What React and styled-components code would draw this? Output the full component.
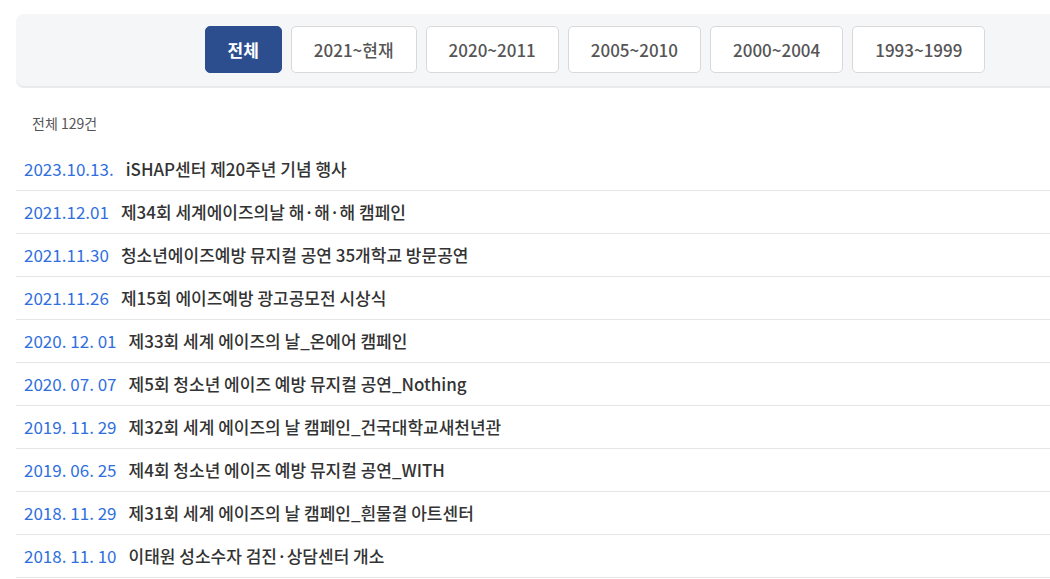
import React from "react";
import styled, { createGlobalStyle } from "styled-components";

const GlobalStyle = createGlobalStyle`
  html, body {
    margin: 0;
    padding: 0;
    background: #ffffff;
    overflow: hidden;
  }
  body {
    font-family: "Noto Sans CJK KR", "Noto Sans", sans-serif;
    color: #333;
  }
`;

const Page = styled.div`
  width: 1050px;
  height: 579px;
  overflow: hidden;
  padding-top: 14px;
  box-sizing: border-box;
`;

const FilterPanel = styled.div`
  margin-left: 16px;
  width: 1158px;
  height: 72px;
  box-sizing: border-box;
  padding-top: 12px;
  background: #f5f6f8;
  border-radius: 8px;
  box-shadow: 0 2px 0 #eaeaea;
  display: flex;
  justify-content: center;
  align-items: flex-start;
  gap: 9px;
`;

const FilterButton = styled.button`
  height: 47px;
  padding: 0 22px;
  border-radius: 5px;
  font-family: inherit;
  font-size: 17px;
  cursor: pointer;
  box-sizing: border-box;
  border: 1px solid ${(p) => (p.$active ? "#2c4e8f" : "#d9d9d9")};
  background: ${(p) => (p.$active ? "#2c4e8f" : "#ffffff")};
  color: ${(p) => (p.$active ? "#ffffff" : "#555555")};
  font-weight: ${(p) => (p.$active ? 700 : 500)};
  min-width: ${(p) => (p.$active ? "77px" : "auto")};
`;

const Count = styled.div`
  padding: 27px 0 0 32px;
  font-size: 14px;
  line-height: 20px;
  color: #555;
`;

const List = styled.ul`
  list-style: none;
  margin: 15px 0 0 16px;
  padding: 0;
`;

const Row = styled.li`
  height: 43px;
  box-sizing: border-box;
  border-bottom: 1px solid #e6e6e6;
  display: flex;
  align-items: center;
  padding: 0 0 1px 8px;
  font-size: 17px;
`;

const DateText = styled.span`
  color: #2f6fde;
  margin-right: 12px;
  white-space: pre;
`;

const Title = styled.span`
  color: #333;
  font-weight: 500;
`;

const filters = ["전체", "2021~현재", "2020~2011", "2005~2010", "2000~2004", "1993~1999"];

const items = [
  ["2023.10.13.", "iSHAP센터 제20주년 기념 행사"],
  ["2021.12.01", "제34회 세계에이즈의날 해·해·해 캠페인"],
  ["2021.11.30", "청소년에이즈예방 뮤지컬 공연 35개학교 방문공연"],
  ["2021.11.26", "제15회 에이즈예방 광고공모전 시상식"],
  ["2020. 12. 01", "제33회 세계 에이즈의 날_온에어 캠페인"],
  ["2020. 07. 07", "제5회 청소년 에이즈 예방 뮤지컬 공연_Nothing"],
  ["2019. 11. 29", "제32회 세계 에이즈의 날 캠페인_건국대학교새천년관"],
  ["2019. 06. 25", "제4회 청소년 에이즈 예방 뮤지컬 공연_WITH"],
  ["2018. 11. 29", "제31회 세계 에이즈의 날 캠페인_흰물결 아트센터"],
  ["2018. 11. 10", "이태원 성소수자 검진·상담센터 개소"],
];

export default function App() {
  return (
    <Page>
      <GlobalStyle />
      <FilterPanel>
        {filters.map((f, i) => (
          <FilterButton key={f} $active={i === 0}>
            {f}
          </FilterButton>
        ))}
      </FilterPanel>
      <Count>전체 129건</Count>
      <List>
        {items.map(([d, t]) => (
          <Row key={d + t}>
            <DateText>{d}</DateText>
            <Title>{t}</Title>
          </Row>
        ))}
      </List>
    </Page>
  );
}
